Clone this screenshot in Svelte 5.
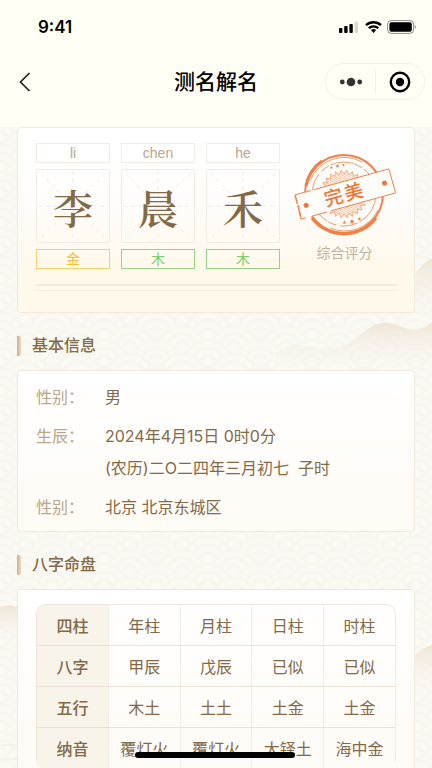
<script lang="ts">
  type NameChar = { pinyin: string; char: string; element: string; tone: 'gold' | 'wood' };

  const nameChars: NameChar[] = [
    { pinyin: 'li', char: '李', element: '金', tone: 'gold' },
    { pinyin: 'chen', char: '晨', element: '木', tone: 'wood' },
    { pinyin: 'he', char: '禾', element: '木', tone: 'wood' }
  ];

  const info = [
    { label: '性别：', lines: ['男'] },
    { label: '生辰：', lines: ['2024年4月15日 0时0分', '(农历)二O二四年三月初七\u00a0 子时'] },
    { label: '性别：', lines: ['北京 北京东城区'] }
  ];

  const columns = ['年柱', '月柱', '日柱', '时柱'];
  const rows = [
    { label: '八字', cells: ['甲辰', '戊辰', '已似', '已似'] },
    { label: '五行', cells: ['木土', '土土', '土金', '土金'] },
    { label: '纳音', cells: ['覆灯火', '覆灯火', '大铎土', '海中金'] }
  ];

  // points of the serrated badge behind the stamp banner
  const badge = Array.from({ length: 52 }, (_, i) => {
    const r = i % 2 ? 20 : 24;
    const a = (i / 52) * Math.PI * 2;
    return `${(51 + r * Math.cos(a)).toFixed(1)},${(42 + r * Math.sin(a)).toFixed(1)}`;
  }).join(' ');
</script>

<div class="page">
  <svg class="backdrop" viewBox="0 0 432 768" preserveAspectRatio="xMidYMin slice" aria-hidden="true">
    <defs>
      <pattern id="waves" width="52" height="28" patternUnits="userSpaceOnUse">
        <g fill="#faf9f3" stroke="#f7f6ef" stroke-width="3">
          {#each [[0, 0], [52, 0], [26, 14], [0, 28], [52, 28], [26, 42]] as [x, y]}
            <circle cx={x} cy={y} r="24" />
            <circle cx={x} cy={y} r="16" />
            <circle cx={x} cy={y} r="8" />
          {/each}
        </g>
      </pattern>
      <linearGradient id="hill" x1="0" y1="0" x2="0" y2="1">
        <stop offset="0" stop-color="#efe5d8" />
        <stop offset="1" stop-color="#faf9f3" stop-opacity="0" />
      </linearGradient>
    </defs>
    <rect width="432" height="768" fill="url(#waves)" />
    <path fill="url(#hill)" d="M400 312C406 290 414 268 432 258V326H400Z" />
    <path
      fill="url(#hill)"
      d="M276 352C290 344 300 344 312 347C326 350 340 349 352 341C366 331 374 321 388 323C402 325 408 332 420 329C426 327 430 324 432 322V374H276Z"
    />
    <path fill="url(#hill)" d="M0 607C8 604 16 606 24 610V645H0Z" />
    <path fill="url(#hill)" d="M404 672C412 656 420 648 432 645V696H404Z" />
    <path fill="none" stroke="#f1eadf" d="M0 745H18M0 759H18" />
  </svg>

  <header>
    <div class="status">
      <span class="time">9:41</span>
      <svg width="78" height="14" viewBox="0 0 78 14" aria-hidden="true">
        <rect x="0" y="8" width="3.4" height="5" rx="1" />
        <rect x="5.2" y="6" width="3.4" height="7" rx="1" />
        <rect x="10.4" y="4" width="3.4" height="9" rx="1" />
        <rect x="15.6" y="1.6" width="3.4" height="11.4" rx="1" opacity="0.15" />
        <g fill="none" stroke="#000" stroke-width="2.3">
          <path d="M27 5.2a11 11 0 0 1 15 0" />
          <path d="M29.8 8.2a7 7 0 0 1 9.4 0" />
        </g>
        <path d="M31.9 10.1a3.9 3.9 0 0 1 5.2 0L34.5 13Z" />
        <rect x="48.6" y="0.6" width="26" height="12.8" rx="3.6" fill="none" stroke="#000" stroke-opacity="0.45" />
        <rect x="50.4" y="2.3" width="22.4" height="9.4" rx="2" />
        <path d="M75.8 4.8v4.4c1.6-.7 1.6-3.7 0-4.4Z" opacity="0.4" />
      </svg>
    </div>
    <div class="nav">
      <button class="back" aria-label="返回">
        <svg width="12" height="20" viewBox="0 0 12 20" aria-hidden="true">
          <path d="M10.5 1 1.5 10l9 9" fill="none" stroke="#222" stroke-width="1.7" />
        </svg>
      </button>
      <h1>测名解名</h1>
      <div class="capsule">
        <button aria-label="更多">
          <svg width="24" height="24" viewBox="0 0 24 24" fill="#333" aria-hidden="true">
            <circle cx="3.3" cy="12" r="2.4" />
            <circle cx="12" cy="12" r="4.3" />
            <circle cx="20.7" cy="12" r="2.4" />
          </svg>
        </button>
        <button aria-label="关闭">
          <svg width="24" height="24" viewBox="0 0 24 24" aria-hidden="true">
            <circle cx="12" cy="12" r="9.2" fill="none" stroke="#000" stroke-width="2.4" />
            <circle cx="12" cy="12" r="4.2" />
          </svg>
        </button>
      </div>
    </div>
  </header>

  <main>
    <section class="card name-card">
      <div class="name-row">
        {#each nameChars as item}
          <div class="name-col">
            <div class="pinyin">{item.pinyin}</div>
            <div class="tile">
              <svg class="grid" viewBox="0 0 74 74" aria-hidden="true">
                <path d="M37 1V73M1 37H73M4 4 70 70M70 4 4 70" />
              </svg>
              <span>{item.char}</span>
            </div>
            <div class={`element ${item.tone}`}>{item.element}</div>
          </div>
        {/each}

        <div class="score">
          <svg class="stamp" width="104" height="84" viewBox="0 0 104 84" role="img" aria-label="完美">
            <defs>
              <pattern id="hatch" width="2" height="2" patternUnits="userSpaceOnUse" patternTransform="rotate(-62)">
                <rect width="1" height="2" fill="#f7c3a3" />
              </pattern>
            </defs>
            <g fill="none" stroke="#f08048">
              <circle cx="51" cy="42" r="39" stroke-width="2" />
              <path d="M13 34A39 39 0 0 1 29 9" stroke-width="3.2" />
              <path d="M19 66A40 40 0 0 0 83 66" stroke-width="3" />
              <path d="M17 29A36.5 36.5 0 0 1 69 10" stroke-width="0.8" />
              <path d="M85 58A37 37 0 0 1 37 76" stroke-width="0.8" />
              <circle cx="51" cy="42" r="32" stroke-width="0.8" stroke-dasharray="34 2 18 4 9 1" />
            </g>
            <polygon points={badge} fill="url(#hatch)" stroke="#f39a6a" stroke-width="0.8" />
            <g fill="#f08048">
              <path d="m44.5 12 .6 1.2 1.4.2-1 1 .2 1.4-1.2-.7-1.2.7.2-1.4-1-1 1.4-.2Z" />
              <path d="m38.5 14 .5 1 1 .2-.8.8.2 1-.9-.5-1 .5.2-1-.8-.8 1.1-.2Z" />
              <path d="m50.5 11.5.5 1 1 .2-.8.8.2 1-.9-.5-1 .5.2-1-.8-.8 1.1-.2Z" />
              <path d="m59 67 .8 1.6 1.8.3-1.3 1.2.3 1.8-1.6-.8-1.6.8.3-1.8-1.3-1.2 1.8-.3Z" />
              <path d="m51.5 68.5.6 1.2 1.3.2-1 .9.2 1.3-1.1-.6-1.2.6.2-1.3-1-.9 1.3-.2Z" />
              <path d="m66.5 65 .6 1.2 1.3.2-1 .9.2 1.3-1.1-.6-1.2.6.2-1.3-1-.9 1.3-.2Z" />
            </g>
            <g transform="rotate(-15.5 52 42)">
              <rect x="3" y="29.5" width="98" height="25" fill="#fffdfa" />
              <path
                d="M3 29.5H20M23 29.5H101V54.5H34M30 54.5H14M8 54.5H3V47"
                fill="none"
                stroke="#f08048"
                stroke-width="0.9"
              />
              <path d="M3.5 30V54.5" fill="none" stroke="#f08048" stroke-width="1.5" stroke-dasharray="9 1 12 2" />
              <circle cx="11.5" cy="42.5" r="2.5" fill="#ee7636" />
              <circle cx="93" cy="42" r="2.5" fill="#ee7636" />
              <text x="40 61" y="49" text-anchor="middle">完美</text>
            </g>
          </svg>
          <p>综合评分</p>
        </div>
      </div>
      <div class="rule"></div>
    </section>

    <h2>基本信息</h2>
    <section class="card">
      <dl>
        {#each info as item}
          <div class="info-row">
            <dt>{item.label}</dt>
            <dd>
              {#each item.lines as line}
                <span>{line}</span>
              {/each}
            </dd>
          </div>
        {/each}
      </dl>
    </section>

    <h2>八字命盘</h2>
    <section class="card">
      <table>
        <thead>
          <tr>
            <th scope="col">四柱</th>
            {#each columns as column}
              <th scope="col">{column}</th>
            {/each}
          </tr>
        </thead>
        <tbody>
          {#each rows as row}
            <tr>
              <th scope="row">{row.label}</th>
              {#each row.cells as cell}
                <td>{cell}</td>
              {/each}
            </tr>
          {/each}
        </tbody>
      </table>
    </section>
  </main>

  <div class="home-bar"></div>
</div>

<style>
  .page {
    position: relative;
    display: flex;
    flex-direction: column;
    height: 100vh;
    overflow: hidden;
    background: #faf9f3;
    color: #826a48;
    font-family: Inter, 'Noto Sans CJK SC', sans-serif;
    font-size: 16px;
  }

  .backdrop {
    position: absolute;
    inset: 0;
    width: 100%;
    height: 100%;
  }

  button {
    display: flex;
    align-items: center;
    justify-content: center;
    padding: 0;
    border: 0;
    background: none;
  }

  header {
    position: relative;
    flex: none;
    background: #fffff5;
    color: #000;
    padding-bottom: 27px;
  }

  .status {
    display: flex;
    align-items: center;
    justify-content: space-between;
    height: 53px;
    padding: 0 15px 0 38px;
  }

  .time {
    font-size: 17px;
    font-weight: 600;
  }

  .nav {
    display: grid;
    grid-template-columns: 1fr auto 1fr;
    align-items: center;
    padding: 10px 7px 0;
  }

  .back {
    width: 36px;
    height: 36px;
  }

  h1 {
    margin: 0;
    font-size: 21px;
    font-weight: 500;
    line-height: 36px;
  }

  .capsule {
    justify-self: end;
    display: flex;
    width: 98px;
    height: 35px;
    border: 1px solid #f1f1e8;
    border-radius: 18px;
  }

  .capsule button {
    flex: 1;
  }

  .capsule button + button::before {
    content: '';
    width: 1px;
    height: 23px;
    margin-right: 12px;
    background: #f1f1e8;
  }

  .capsule button + button {
    justify-content: flex-start;
  }

  main {
    position: relative;
    flex: 1;
    min-height: 0;
    overflow-y: auto;
    scrollbar-width: none;
    padding: 0 17px;
  }

  .card {
    padding: 14px 18px;
    border: 1px solid #f3e8dc;
    border-radius: 4px;
    background: linear-gradient(#fff, #fffbf5);
  }

  .name-card {
    padding: 15px 16px 21px 18px;
    background: linear-gradient(#fff 10%, #fefdfb 40%, #fff9ec 75%);
  }

  .name-row {
    display: flex;
    gap: 11px;
  }

  .name-col {
    display: flex;
    flex-direction: column;
    gap: 6px;
    width: 74px;
    text-align: center;
  }

  .pinyin,
  .element {
    border: 1px solid #f6ebe2;
    font-size: 14px;
    line-height: 18px;
  }

  .pinyin {
    color: #b8a68c;
    font-family: 'Liberation Sans', sans-serif;
  }

  .gold {
    border-color: #f5cf6c;
    color: #f2be3c;
  }

  .wood {
    border-color: #98d28a;
    color: #7ccb6c;
  }

  .tile {
    position: relative;
    box-sizing: border-box;
    height: 74px;
    border: 1px solid #f4ece3;
    border-radius: 2px;
    font-family: 'Noto Serif CJK SC', 'Noto Serif SC', 'Liberation Serif', 'Noto Sans CJK SC', serif;
    font-size: 40px;
    font-weight: 600;
    line-height: 74px;
  }

  .tile span {
    position: relative;
  }

  .grid {
    position: absolute;
    inset: 0;
    fill: none;
    stroke: #f1e9e1;
    stroke-dasharray: 4 4;
  }

  .score {
    flex: 1;
    display: flex;
    flex-direction: column;
    align-items: center;
    padding-top: 9px;
  }

  .stamp {
    overflow: visible;
  }

  .stamp text {
    fill: #ee7636;
    font-size: 19px;
    font-weight: 500;
  }

  .score p {
    margin: 7px 0 0;
    color: #c0b29e;
    font-size: 14px;
    line-height: 20px;
  }

  .rule {
    height: 4px;
    margin-top: 15px;
    border-top: 2px solid #f8e9de;
    border-bottom: 1px solid #f8ebe0;
  }

  h2 {
    display: flex;
    align-items: center;
    gap: 11px;
    margin: 22px 0 14px;
    font-size: 16px;
    font-weight: 500;
    line-height: 21px;
  }

  h2::before {
    content: '';
    width: 4px;
    height: 20px;
    border-radius: 0 2px 2px 0;
    background: linear-gradient(90deg, #cfae85, #ecdcc4);
  }

  dl {
    display: flex;
    flex-direction: column;
    gap: 7px;
    margin: -4px 0 -6px;
    line-height: 32px;
  }

  .info-row {
    display: flex;
  }

  dt {
    width: 69px;
    color: #b8a68c;
  }

  dd {
    margin: 0;
  }

  dd span {
    display: block;
  }

  table {
    width: 100%;
    border: 1px solid #ece6de;
    border-right: 0;
    border-bottom: 0;
    border-radius: 10px;
    border-spacing: 0;
    table-layout: fixed;
    overflow: hidden;
  }

  th,
  td {
    box-sizing: border-box;
    height: 41px;
    padding: 0;
    border-right: 1px solid #f1ece6;
    border-bottom: 1px solid #ebe1d6;
    font-weight: 400;
    text-align: center;
  }

  th:first-child {
    background: #f9f4ea;
    font-weight: 500;
  }

  thead th:last-child {
    border-top-right-radius: 10px;
  }

  .home-bar {
    position: absolute;
    bottom: 10px;
    left: 50%;
    width: 160px;
    height: 6px;
    margin-left: -81px;
    border-radius: 3px;
    background: #000;
  }
</style>
